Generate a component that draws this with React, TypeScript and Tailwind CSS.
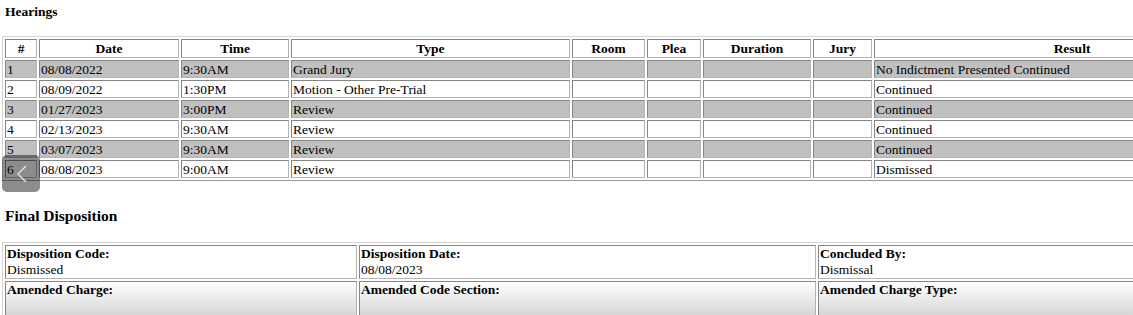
const HEARINGS = [
  { n: '1', date: '08/08/2022', time: '9:30AM', type: 'Grand Jury', result: 'No Indictment Presented Continued' },
  { n: '2', date: '08/09/2022', time: '1:30PM', type: 'Motion - Other Pre-Trial', result: 'Continued' },
  { n: '3', date: '01/27/2023', time: '3:00PM', type: 'Review', result: 'Continued' },
  { n: '4', date: '02/13/2023', time: '9:30AM', type: 'Review', result: 'Continued' },
  { n: '5', date: '03/07/2023', time: '9:30AM', type: 'Review', result: 'Continued' },
  { n: '6', date: '08/08/2023', time: '9:00AM', type: 'Review', result: 'Dismissed' },
];

// classic border="1" look: inset cells inside an outset table
const CELL = 'border border-t-[#858585] border-l-[#858585] border-b-[#b4b4b4] border-r-[#b4b4b4] px-[1px] py-0';
const TABLE =
  'table-fixed border-separate border-spacing-[2px] border border-t-[#d4d4d4] border-l-[#d4d4d4] border-b-[#9a9a9a] border-r-[#9a9a9a] w-[1271px]';
const AMENDED = `${CELL} h-[36px] bg-linear-to-b from-white to-[#d6d6d6]`;

export default function App() {
  return (
    <div className="relative w-[1133px] h-[315px] overflow-hidden bg-white text-black font-['Liberation_Serif','Times_New_Roman',serif]">
      <div className="pl-[5px] pt-[4px] text-[13.5px] font-bold leading-[15px]">Hearings</div>

      <div className="pl-[2px] mt-[17px]">
        <table className={TABLE}>
          <thead>
            <tr className="h-[19px] text-[13.5px] leading-[15px]">
              <th className={`${CELL} w-[32px] text-center`}>#</th>
              <th className={`${CELL} w-[140px] text-center`}>Date</th>
              <th className={`${CELL} w-[108px] text-center`}>Time</th>
              <th className={`${CELL} w-[279px] text-center`}>Type</th>
              <th className={`${CELL} w-[73px] text-center`}>Room</th>
              <th className={`${CELL} w-[54px] text-center`}>Plea</th>
              <th className={`${CELL} w-[108px] text-center`}>Duration</th>
              <th className={`${CELL} w-[59px] text-center`}>Jury</th>
              <th className={`${CELL} w-[396px] text-center`}>Result</th>
            </tr>
          </thead>
          <tbody>
            {HEARINGS.map((h, i) => (
              <tr
                key={h.n}
                className={`h-[18px] text-[13.5px] leading-[15px] ${i % 2 === 0 ? 'bg-[#c0c0c0]' : 'bg-white'}`}
              >
                <td className={CELL}>{h.n}</td>
                <td className={CELL}>{h.date}</td>
                <td className={CELL}>{h.time}</td>
                <td className={CELL}>{h.type}</td>
                <td className={CELL}></td>
                <td className={CELL}></td>
                <td className={CELL}></td>
                <td className={CELL}></td>
                <td className={CELL}>{h.result}</td>
              </tr>
            ))}
          </tbody>
        </table>
      </div>

      <div className="pl-[5px] mt-[26px] text-[15.5px] font-bold leading-[17px]">Final Disposition</div>

      <div className="pl-[2px] mt-[18px]">
        <table className={TABLE}>
          <tbody>
            <tr className="text-[13.5px] leading-[16px] align-top">
              <td className={`${CELL} w-[352px]`}>
                <div className="font-bold">Disposition Code:</div>
                <div>Dismissed</div>
              </td>
              <td className={`${CELL} w-[457px]`}>
                <div className="font-bold">Disposition Date:</div>
                <div>08/08/2023</div>
              </td>
              <td className={`${CELL} w-[452px]`}>
                <div className="font-bold">Concluded By:</div>
                <div>Dismissal</div>
              </td>
            </tr>
            <tr className="text-[13.5px] leading-[16px] align-top">
              <td className={AMENDED}>
                <div className="font-bold">Amended Charge:</div>
              </td>
              <td className={AMENDED}>
                <div className="font-bold">Amended Code Section:</div>
              </td>
              <td className={AMENDED}>
                <div className="font-bold">Amended Charge Type:</div>
              </td>
            </tr>
          </tbody>
        </table>
      </div>

      {/* browser back-swipe overlay */}
      <div className="absolute left-[2px] top-[155px] w-[38px] h-[37px] rounded-[5px] bg-black/45 flex items-center justify-center">
        <svg width="12" height="18" viewBox="0 0 12 18" className="ml-[2px]">
          <polyline points="10,1 2,9 10,17" fill="none" stroke="#e6e6e6" strokeWidth="1.3" />
        </svg>
      </div>
    </div>
  );
}
